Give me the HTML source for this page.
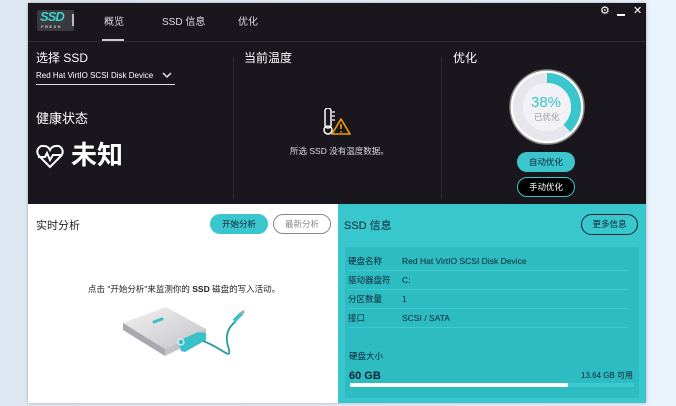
<!DOCTYPE html>
<html><head><meta charset="utf-8"><style>
*{margin:0;padding:0;box-sizing:border-box}
body{width:676px;height:406px;overflow:hidden;background:linear-gradient(90deg,#dfe8f2,#e6f0fa 60%,#e9f3fc);font-family:"Liberation Sans","Noto Sans CJK SC",sans-serif;position:relative}
.a{position:absolute;white-space:nowrap;line-height:1.2}
.win{position:absolute;left:28px;top:3px;width:618px;height:400px;background:#19171d;overflow:hidden;box-shadow:0 0 3px rgba(0,0,0,.3)}
.w{color:#fff}
</style></head><body>
<div class="win">
  <div class="a" style="left:9px;top:7px;width:37px;height:21px;background:#3a3a3e;border-radius:2px"></div>
  <div class="a" style="left:12px;top:6px;font:italic bold 13px 'Liberation Sans';color:#3fd0d0;letter-spacing:-1px">SSD</div>
  <div class="a" style="left:13px;top:21px;font:bold 4px 'Liberation Sans';color:#ccc;letter-spacing:1.5px">FRESH</div>
  <div class="a" style="left:44px;top:11px;width:2px;height:12px;background:#bbb"></div>
  <div class="a" style="left:76px;top:14px;font-size:10px;color:#ddd">概览</div>
  <div class="a" style="left:74px;top:36px;width:22px;height:2px;background:#ccc"></div>
  <div class="a" style="left:134px;top:14px;font-size:10px;color:#ddd">SSD 信息</div>
  <div class="a" style="left:210px;top:14px;font-size:10px;color:#ddd">优化</div>
  <div class="a" style="left:0;top:38px;width:618px;height:1px;background:#2d2b31"></div>
  <div class="a w" style="left:572px;top:2px;font-size:11px">⚙</div>
  <div class="a" style="left:589px;top:11px;width:8px;height:1.5px;background:#fff"></div>
  <div class="a w" style="left:605px;top:2px;font-size:11px">✕</div>
  <div class="a w" style="left:8px;top:48px;font-size:12px">选择 SSD</div>
  <div class="a w" style="left:8px;top:68px;font-size:8px">Red Hat VirtIO SCSI Disk Device</div>
  <svg class="a" style="left:134px;top:69px" width="10" height="7"><path d="M1 1L5 5L9 1" stroke="#fff" stroke-width="1.3" fill="none"/></svg>
  <div class="a" style="left:8px;top:81px;width:139px;height:1px;background:#ddd"></div>
  <div class="a w" style="left:8px;top:108px;font-size:13px">健康状态</div>
  <svg class="a" style="left:8px;top:141px" width="28" height="25" viewBox="0 0 28 25"><path d="M14 23L3 12C-1 7 3 1 8 2C11 2 13 4 14 6C15 4 17 2 20 2C25 1 29 7 25 12Z" stroke="#fff" stroke-width="2" fill="none"/><path d="M2 13H9L11 9L14 16L17 11H26" stroke="#fff" stroke-width="2" fill="none"/></svg>
  <div class="a w" style="left:43px;top:137px;font-size:26px;font-weight:bold">未知</div>
  <div class="a" style="left:205px;top:54px;width:1px;height:142px;background:#2d2b31"></div>
  <div class="a w" style="left:216px;top:48px;font-size:12px">当前温度</div>
  <svg class="a" style="left:295px;top:105px" width="30" height="30"><rect x="2" y="0" width="6" height="20" rx="3" stroke="#fff" stroke-width="1.5" fill="none"/><circle cx="5" cy="22" r="4" stroke="#fff" stroke-width="1.5" fill="none"/><path d="M9 4H12M9 8H12M9 12H12" stroke="#fff" stroke-width="1.2"/><path d="M18 11L27 26H9Z" stroke="#f0a000" stroke-width="1.6" fill="#19171d" stroke-linejoin="round"/><path d="M18 16V21M18 23V24.5" stroke="#f0a000" stroke-width="1.6"/></svg>
  <div class="a" style="left:262px;top:143px;font-size:8.5px;color:#ddd">所选 SSD 没有温度数据。</div>
  <div class="a" style="left:413px;top:54px;width:1px;height:142px;background:#2d2b31"></div>
  <div class="a w" style="left:425px;top:48px;font-size:12px">优化</div>
  <svg class="a" style="left:479px;top:64px" width="80" height="80" viewBox="0 0 80 80"><circle cx="40" cy="40" r="37" fill="#fff" stroke="#888" stroke-width="1.5"/><circle cx="40" cy="40" r="29" fill="none" stroke="#e6e6ec" stroke-width="10"/><circle cx="40" cy="40" r="29" fill="none" stroke="#3ac6cc" stroke-width="10" stroke-dasharray="69.2 200" transform="rotate(-90 40 40)"/><circle cx="40" cy="40" r="24" fill="#f2f2f6"/></svg>
  <div class="a" style="left:503px;top:91px;font-size:15px;color:#3ac6cc">38%</div>
  <div class="a" style="left:506px;top:109px;font-size:8.5px;color:#999">已优化</div>
  <div class="a" style="left:489px;top:149px;width:58px;height:20px;border-radius:10px;background:#3ac6cc;color:#123;font-size:8.5px;text-align:center;line-height:20px">自动优化</div>
  <div class="a" style="left:489px;top:174px;width:58px;height:20px;border-radius:10px;background:#000;border:1px solid #3ac6cc;color:#fff;font-size:8.5px;text-align:center;line-height:18px">手动优化</div>
  <div class="a" style="left:0;top:201px;width:310px;height:199px;background:#fff"></div>
  <div class="a" style="left:8px;top:217px;font-size:11px;color:#222">实时分析</div>
  <div class="a" style="left:182px;top:211px;width:58px;height:20px;border-radius:10px;background:#3ac6cc;color:#123;font-size:8.5px;text-align:center;line-height:20px">开始分析</div>
  <div class="a" style="left:245px;top:211px;width:58px;height:20px;border-radius:10px;border:1px solid #888;color:#888;font-size:8.5px;text-align:center;line-height:18px">最新分析</div>
  <div class="a" style="left:60px;top:281px;font-size:8.5px;color:#222">点击 "开始分析"来监测你的 <b>SSD</b> 磁盘的写入活动。</div>
  <svg class="a" style="left:0;top:0" width="310" height="400">
    <defs><linearGradient id="g" x1="0" y1="0" x2="1" y2="1"><stop offset="0" stop-color="#f2f2f4"/><stop offset="1" stop-color="#c4c4c8"/></linearGradient></defs>
    <path d="M95 320L138 304L178 326L137 346Z" fill="url(#g)"/>
    <path d="M95 320L137 346L137 353L95 327Z" fill="#a8a8ae"/>
    <path d="M137 346L178 326L178 333L137 353Z" fill="#c4c4c8"/>
    <path d="M150 338L170 329L178 330L178 337L157 349L153 348Z" fill="#3ac0c8"/>
    <circle cx="153" cy="339" r="3" fill="#3ac0c8" stroke="#fff" stroke-width="1"/>
    <path d="M126 319L134 316" stroke="#3ac0c8" stroke-width="3" stroke-linecap="round"/>
    <path d="M165 340L175 337" stroke="#3ac0c8" stroke-width="3"/>
    <path d="M175 338C195 345 205 360 200 343C196 330 203 322 208 318" stroke="#2a9aa4" stroke-width="1.8" fill="none"/>
    <path d="M206 318L214 310" stroke="#3ac0c8" stroke-width="4"/>
    <path d="M213 311L216 308" stroke="#aaa" stroke-width="3"/>
  </svg>
  <div class="a" style="left:310px;top:201px;width:308px;height:199px;background:#38c7cc"></div>
  <div class="a" style="left:316px;top:217px;font-size:11px;color:#123">SSD 信息</div>
  <div class="a" style="left:553px;top:211px;width:57px;height:21px;border-radius:11px;border:1px solid #123;color:#123;font-size:8.5px;text-align:center;line-height:19px">更多信息</div>
  <div class="a" style="left:317px;top:244px;width:294px;height:151px;background:#2dbcc2"></div>
  <div class="a" style="left:320px;top:249px;font-size:8.5px;color:#123;line-height:19px">硬盘名称<br>驱动器盘符<br>分区数量<br>接口</div>
  <div class="a" style="left:374px;top:249px;font-size:8.5px;color:#123;line-height:19px">Red Hat VirtIO SCSI Disk Device<br>C:<br>1<br>SCSI / SATA</div>
  <div class="a" style="left:320px;top:267px;width:280px;height:1px;background:#3ccbd0"></div>
  <div class="a" style="left:320px;top:286px;width:280px;height:1px;background:#3ccbd0"></div>
  <div class="a" style="left:320px;top:305px;width:280px;height:1px;background:#3ccbd0"></div>
  <div class="a" style="left:320px;top:324px;width:280px;height:1px;background:#3ccbd0"></div>
  <div class="a" style="left:321px;top:348px;font-size:8.5px;color:#123">硬盘大小</div>
  <div class="a" style="left:321px;top:367px;font-size:11px;font-weight:bold;color:#123">60 GB</div>
  <div class="a" style="left:553px;top:368px;font-size:8px;color:#123">13.64 GB 可用</div>
  <div class="a" style="left:322px;top:380px;width:284px;height:4px;background:#3ccbd0"></div>
  <div class="a" style="left:322px;top:380px;width:218px;height:4px;background:#fff"></div>
</div>
</body></html>
